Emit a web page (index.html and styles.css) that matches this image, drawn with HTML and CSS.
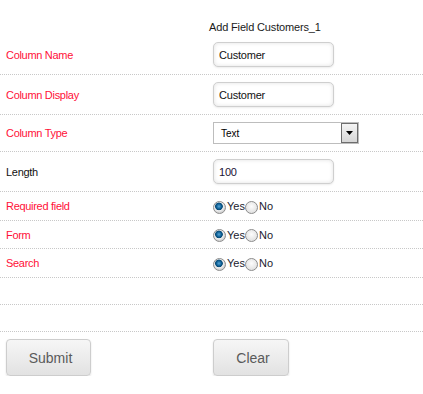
FILE: index.html
```html
<!DOCTYPE html>
<html lang="en">
<head>
  <meta charset="UTF-8" />
  <title>Add Field Customers_1</title>
  <link rel="stylesheet" href="styles.css">
</head>
<body>
  <form class="field-form">
    <div class="form-title">Add Field Customers_1</div>

    <div class="form-row row-input">
      <label class="field-label required">Column Name</label>
      <div class="field-value"><input class="text-input" type="text" value="Customer" /></div>
    </div>

    <div class="form-row row-input">
      <label class="field-label required">Column Display</label>
      <div class="field-value"><input class="text-input" type="text" value="Customer" /></div>
    </div>

    <div class="form-row row-select">
      <label class="field-label required">Column Type</label>
      <div class="field-value">
        <div class="select-box">
          <span class="select-text">Text</span>
          <span class="select-arrow">
            <svg width="7" height="4" viewBox="0 0 7 4"><path d="M0 0H7L3.5 4Z" fill="#000"/></svg>
          </span>
        </div>
      </div>
    </div>

    <div class="form-row row-input">
      <label class="field-label">Length</label>
      <div class="field-value"><input class="text-input number" type="text" value="100" /></div>
    </div>

    <div class="form-row row-radio">
      <label class="field-label required">Required field</label>
      <div class="field-value radio-group">
        <input class="radio" type="radio" name="required" checked /><span class="radio-text">Yes</span>
        <input class="radio" type="radio" name="required" /><span class="radio-text">No</span>
      </div>
    </div>

    <div class="form-row row-radio short">
      <label class="field-label required">Form</label>
      <div class="field-value radio-group">
        <input class="radio" type="radio" name="form" checked /><span class="radio-text">Yes</span>
        <input class="radio" type="radio" name="form" /><span class="radio-text">No</span>
      </div>
    </div>

    <div class="form-row row-radio">
      <label class="field-label required">Search</label>
      <div class="field-value radio-group">
        <input class="radio" type="radio" name="search" checked /><span class="radio-text">Yes</span>
        <input class="radio" type="radio" name="search" /><span class="radio-text">No</span>
      </div>
    </div>

    <div class="form-row row-empty"></div>
    <div class="form-row row-empty"></div>

    <div class="form-actions">
      <button class="btn btn-submit" type="button">Submit</button>
      <button class="btn btn-clear" type="button">Clear</button>
    </div>
  </form>
</body>
</html>
```

FILE: styles.css
```css
* {
  box-sizing: border-box;
}

body {
  margin: 0;
  background: #ffffff;
  color: #222;
  font-family: "Liberation Sans", Arial, sans-serif;
  font-size: 11px;
}

.field-form {
  width: 100%;
}

.form-title {
  height: 35px;
  padding: 20px 0 0 209px;
  font-size: 11px;
  color: #1a1a1a;
  line-height: 14px;
  letter-spacing: -0.15px;
}

.form-row {
  display: grid;
  grid-template-columns: 213px 1fr;
  align-items: center;
  border-bottom: 1px dotted #c8c8c8;
}

.row-input {
  height: 40px;
}

.row-select {
  height: 37px;
}

.row-radio {
  height: 29px;
}

.row-radio.short {
  height: 28px;
}

.row-empty {
  height: 27px;
}

.field-label {
  padding-left: 6px;
  color: #111;
  line-height: 14px;
  letter-spacing: -0.3px;
}

.field-label.required {
  color: #ff1038;
}

.text-input {
  width: 121px;
  height: 25px;
  margin: 0;
  padding: 0 5px;
  border: 1px solid #cfcfcf;
  border-radius: 5px;
  background: #fff;
  box-shadow: inset 0 0 4px rgba(0, 0, 0, 0.12), 0 1px 2px rgba(0, 0, 0, 0.08);
  font-family: "Liberation Sans", Arial, sans-serif;
  font-size: 11px;
  letter-spacing: -0.2px;
  color: #111;
  outline: none;
}

.text-input.number {
  color: #1a1233;
}

.select-box {
  display: flex;
  align-items: center;
  width: 146px;
  height: 22px;
  border: 1px solid #bdbdbd;
  background: #fff;
}

.select-text {
  flex: 1;
  padding-left: 7px;
  font-size: 10px;
  color: #000;
}

.select-arrow {
  display: flex;
  align-items: center;
  justify-content: center;
  width: 17px;
  height: 20px;
  border: 1px solid #6d6d6d;
  background: linear-gradient(#f4f4f4, #d6d6d6);
}

.radio-group {
  display: flex;
  align-items: center;
}

.radio {
  appearance: none;
  width: 13px;
  height: 13px;
  margin: 2px 0 0 0;
  border: 1px solid #8c8c8c;
  border-radius: 50%;
  background: radial-gradient(circle at 50% 40%, #fdfdfd, #d8d8d8);
}

.radio:checked {
  background: radial-gradient(circle at 45% 40%, #58a6d8 0, #0d5f94 2.5px, #0a4a74 3.5px, #f2f2f2 4.2px, #d4d4d4 6px);
}

.radio-text {
  color: #1b1b2e;
  font-size: 11px;
  line-height: 14px;
  padding-left: 1px;
}

.form-actions {
  display: grid;
  grid-template-columns: 213px 1fr;
  padding-top: 7px;
}

.btn {
  height: 37px;
  margin: 0;
  padding: 0 0 0 4px;
  border: 1px solid #cdcdcd;
  border-radius: 4px;
  background: linear-gradient(#f6f6f6, #e2e2e2);
  box-shadow: 0 1px 2px rgba(0, 0, 0, 0.12);
  font-family: "Liberation Sans", Arial, sans-serif;
  font-size: 14px;
  color: #5a5a5a;
  cursor: pointer;
}

.btn-submit {
  width: 85px;
  margin-left: 6px;
}

.btn-clear {
  width: 76px;
}
```
